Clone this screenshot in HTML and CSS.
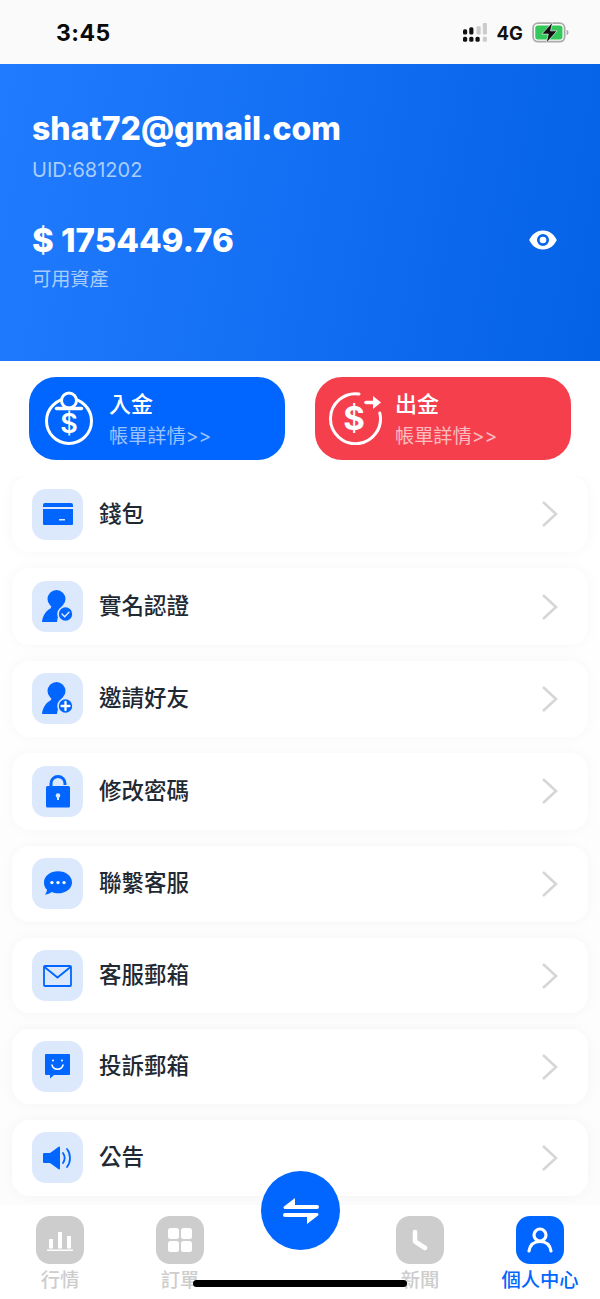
FILE: index.html
```html
<!DOCTYPE html>
<html lang="zh-Hant">
<head>
<meta charset="utf-8">
<title>個人中心</title>
<link rel="stylesheet" href="styles.css">
</head>
<body>
<div class="app">
  <header class="status">
    <span class="time">3:45</span>
    <div class="status-right">
      <svg class="signal" width="25" height="21" viewBox="0 0 24 20">
        <g fill="#111"><rect x="0" y="6" width="4" height="5" rx="1.500"/><rect x="0" y="13" width="4" height="5" rx="1.500"/><rect x="6" y="4" width="4" height="7" rx="1.500"/><rect x="6" y="13" width="4" height="5" rx="1.500"/><rect x="12" y="13" width="4" height="5" rx="1.500"/></g>
        <g fill="#ccc"><rect x="13" y="3" width="4" height="8" rx="1"/><rect x="19" y="0" width="4" height="11" rx="1"/><rect x="19" y="13" width="4" height="5" rx="1"/></g>
      </svg>
      <span class="net">4G</span>
      <svg class="battery" width="37" height="22" viewBox="0 0 34 20">
        <rect x="1" y="1" width="29" height="17" rx="4.500" fill="none" stroke="#aaa" stroke-width="1.600"/>
        <rect x="3" y="3" width="25" height="13" rx="2.500" fill="#34c759"/>
        <path d="M31.800 7v5c1-.4 1.700-1.300 1.700-2.500s-.7-2.100-1.700-2.500z" fill="#aaa"/>
        <path d="M19 0L9 11h6l-2 8.500L23 8h-6z" fill="#111" stroke="#fafafa" stroke-width=".6"/>
      </svg>
    </div>
  </header>

  <section class="hero">
    <h1 class="email">shat72@gmail.com</h1>
    <p class="uid">UID:681202</p>
    <div class="balance-row">
      <span class="balance">$ 175449.76</span>
      <svg class="eye" width="28" height="20" viewBox="0 0 28 20"><path fill-rule="evenodd" d="M14 .5C21 .5 25.500 5 27.800 10 25.500 15 21 19.500 14 19.500S2.500 15 .2 10C2.500 5 7 .5 14 .5zm0 3.500a6 6 0 1 0 0 12 6 6 0 0 0 0-12z" fill="#fff"/><circle cx="14" cy="10" r="3.300" fill="#fff"/></svg>
    </div>
    <p class="caption">可用資產</p>
  </section>

  <section class="actions">
    <a class="action action-in">
      <svg class="action-icon" width="50" height="54" viewBox="0 0 50 54">
        <circle cx="24" cy="30" r="22.500" fill="none" stroke="#fff" stroke-width="3"/>
        <circle cx="24" cy="9.500" r="7.500" fill="#0066ff" stroke="#fff" stroke-width="3"/>
        <path d="M11.500 17.500h25" stroke="#fff" stroke-width="3.500" stroke-linecap="round"/>
        <text x="24" y="42" text-anchor="middle" class="dollar">$</text>
      </svg>
      <div class="action-text"><strong>入金</strong><span>帳單詳情&gt;&gt;</span></div>
    </a>
    <a class="action action-out">
      <svg class="action-icon" width="56" height="54" viewBox="0 0 56 54">
        <path d="M32 3A25 25 0 1 0 52.800 22" fill="none" stroke="#fff" stroke-width="3" stroke-linecap="round"/>
        <path d="M39 11.500h8" stroke="#fff" stroke-width="3.600" stroke-linecap="round"/>
        <path d="M46 5l8 6.500-8 6.500z" fill="#fff"/>
        <text x="27" y="39" text-anchor="middle" class="dollar dollar-lg">$</text>
      </svg>
      <div class="action-text"><strong>出金</strong><span>帳單詳情&gt;&gt;</span></div>
    </a>
  </section>

  <main class="menu">
    <a class="row">
      <span class="row-icon"><svg width="30" height="24" viewBox="0 0 30 24"><path fill="#0066ff" d="M2 1h26a2 2 0 0 1 2 2v2H0V3a2 2 0 0 1 2-2zM0 7h30v15a1 1 0 0 1-1 1H1a1 1 0 0 1-1-1zm16 10v1.500h6V17z" fill-rule="evenodd"/></svg></span>
      <span class="row-label">錢包</span>
      <svg class="chev" width="18" height="28" viewBox="0 0 18 28"><path d="M2 2l13 12L2 26"/></svg>
    </a>
    <a class="row">
      <span class="row-icon"><svg width="32" height="33" viewBox="0 0 32 33"><circle cx="14.500" cy="9" r="9" fill="#0066ff"/><path fill="#0066ff" d="M0 32c.6-6 3.600-11 8.500-13.500L10 15h9l1.500 3.500c1.500.7 2.700 1.500 3.700 2.500A11 11 0 0 0 15 32z"/><circle cx="23.500" cy="24" r="7.500" fill="#0066ff" stroke="#dce9fd" stroke-width="1.600"/><path d="M20 24l2.700 2.700 4.300-4.400" fill="none" stroke="#dce9fd" stroke-width="1.500" stroke-linecap="round"/></svg></span>
      <span class="row-label">實名認證</span>
      <svg class="chev" width="18" height="28" viewBox="0 0 18 28"><path d="M2 2l13 12L2 26"/></svg>
    </a>
    <a class="row">
      <span class="row-icon"><svg width="32" height="33" viewBox="0 0 32 33"><circle cx="14.500" cy="9" r="9" fill="#0066ff"/><path fill="#0066ff" d="M0 32c.6-6 3.600-11 8.500-13.500L10 15h9l1.500 3.500c1.500.7 2.700 1.500 3.700 2.500A11 11 0 0 0 15 32z"/><circle cx="23.500" cy="24" r="7.500" fill="#0066ff" stroke="#dce9fd" stroke-width="1.600"/><path d="M19.500 24h8M23.500 20v8" stroke="#fff" stroke-width="2.300" stroke-linecap="round"/></svg></span>
      <span class="row-label">邀請好友</span>
      <svg class="chev" width="18" height="28" viewBox="0 0 18 28"><path d="M2 2l13 12L2 26"/></svg>
    </a>
    <a class="row">
      <span class="row-icon"><svg width="26" height="33" viewBox="0 0 26 33"><path d="M6 11V8.500a7 7 0 0 1 14 0V10" fill="none" stroke="#0066ff" stroke-width="3"/><rect x="1" y="11" width="24" height="21.500" rx="1.500" fill="#0066ff"/><circle cx="13" cy="20.500" r="2.300" fill="#dce9fd"/><path d="M12 21h2v4h-2z" fill="#dce9fd"/></svg></span>
      <span class="row-label">修改密碼</span>
      <svg class="chev" width="18" height="28" viewBox="0 0 18 28"><path d="M2 2l13 12L2 26"/></svg>
    </a>
    <a class="row">
      <span class="row-icon"><svg width="28" height="25" viewBox="0 0 30 26"><path fill="#0066ff" d="M15 0c8.300 0 15 5.200 15 11.800S23.300 23.500 15 23.500c-2.500 0-4.800-.5-6.800-1.300C6 24 3.500 25 1 24.800c1.200-1.300 2-3 2.300-5C1.200 17.800 0 15 0 11.800 0 5.200 6.700 0 15 0z"/><circle cx="8.500" cy="12" r="1.800" fill="#fff"/><circle cx="15" cy="12" r="1.800" fill="#fff"/><circle cx="21.500" cy="12" r="1.800" fill="#fff"/></svg></span>
      <span class="row-label">聯繫客服</span>
      <svg class="chev" width="18" height="28" viewBox="0 0 18 28"><path d="M2 2l13 12L2 26"/></svg>
    </a>
    <a class="row row-s">
      <span class="row-icon"><svg width="29" height="22" viewBox="0 0 29 22"><rect x="1" y="1" width="27" height="20" rx="1" fill="none" stroke="#0066ff" stroke-width="1.800"/><path d="M1.500 2l13 10.500L27.500 2" fill="none" stroke="#0066ff" stroke-width="1.800"/></svg></span>
      <span class="row-label">客服郵箱</span>
      <svg class="chev" width="18" height="28" viewBox="0 0 18 28"><path d="M2 2l13 12L2 26"/></svg>
    </a>
    <a class="row row-s">
      <span class="row-icon"><svg width="25" height="25" viewBox="0 0 25 25"><path fill="#0066ff" d="M1 0h23a1 1 0 0 1 1 1v19a1 1 0 0 1-1 1H9l-4 3.500V21H1a1 1 0 0 1-1-1V1a1 1 0 0 1 1-1z"/><circle cx="8" cy="6.500" r="1" fill="#fff"/><circle cx="17" cy="6.500" r="1" fill="#fff"/><path d="M7 11c1.200 5.500 9.800 5.500 11 0" fill="none" stroke="#fff" stroke-width="1.500" stroke-linecap="round"/></svg></span>
      <span class="row-label">投訴郵箱</span>
      <svg class="chev" width="18" height="28" viewBox="0 0 18 28"><path d="M2 2l13 12L2 26"/></svg>
    </a>
    <a class="row row-s">
      <span class="row-icon"><svg width="30" height="24" viewBox="0 0 30 24"><path fill="#0066ff" d="M1 7h6l9-6.500c.5 0 1 .4 1 1v21c0 .6-.5 1-1 1L7 17H1a1 1 0 0 1-1-1V8a1 1 0 0 1 1-1z"/><path d="M20 7c2 3 2 7 0 10M24 3c4 5 4 13 0 18" fill="none" stroke="#0066ff" stroke-width="1.800" stroke-linecap="round"/></svg></span>
      <span class="row-label">公告</span>
      <svg class="chev" width="18" height="28" viewBox="0 0 18 28"><path d="M2 2l13 12L2 26"/></svg>
    </a>
  </main>

  <nav class="tabs">
    <a class="tab">
      <span class="tab-icon"><svg width="26" height="22" viewBox="0 0 26 22"><path fill="#fff" d="M2 10h4v9.500H2zM11 3h4v16.500h-4zM20 7h4v12.500h-4zM0 20.500h26V22H0z"/></svg></span>
      <span class="tab-label">行情</span>
    </a>
    <a class="tab">
      <span class="tab-icon"><svg width="24" height="24" viewBox="0 0 24 24"><rect x="0" y="0" width="11" height="11" rx="2.500" fill="#fff"/><rect x="13" y="0" width="11" height="11" rx="2.500" fill="#fff"/><rect x="0" y="13" width="11" height="11" rx="2.500" fill="#fff"/><rect x="13" y="13" width="11" height="11" rx="2.500" fill="#fff"/></svg></span>
      <span class="tab-label">訂單</span>
    </a>
    <span class="tab tab-spacer"></span>
    <a class="tab">
      <span class="tab-icon"><svg width="16" height="22" viewBox="0 0 16 22"><path d="M3 3v9.500L13 19" fill="none" stroke="#fff" stroke-width="4.500" stroke-linecap="round" stroke-linejoin="round"/></svg></span>
      <span class="tab-label">新聞</span>
    </a>
    <a class="tab tab-active">
      <span class="tab-icon"><svg width="26" height="26" viewBox="0 0 26 26"><circle cx="13" cy="8" r="6" fill="none" stroke="#fff" stroke-width="3.200"/><path d="M2 24c1-6 5-9.500 11-9.500S23 18 24 24" fill="none" stroke="#fff" stroke-width="3.200" stroke-linecap="round"/></svg></span>
      <span class="tab-label">個人中心</span>
    </a>
  </nav>

  <button class="swap" type="button" aria-label="swap">
    <svg width="38" height="28" viewBox="0 0 38 28"><path fill="#fff" d="M13 1v7h22a2 2 0 0 1 0 4H3a1.500 1.500 0 0 1-1-2.600zM3 16h32a1.500 1.500 0 0 1 1 2.600L25 27v-7H3a2 2 0 0 1 0-4z"/></svg>
  </button>
  <div class="home-bar"></div>
</div>
</body>
</html>
```

FILE: styles.css
```css
* { box-sizing: border-box; }
html, body { margin: 0; padding: 0; }
body {
  width: 600px;
  height: 1299px;
  overflow: hidden;
  background: #fff;
  font-family: Inter, "Noto Sans CJK TC", sans-serif;
}
p, h1 { margin: 0; }
.app {
  position: relative;
  display: flex;
  flex-direction: column;
  width: 600px;
  height: 1299px;
  overflow: hidden;
}
.status {
  flex: none;
  height: 64px;
  padding: 2px 31px 0 56px;
  display: flex;
  align-items: center;
  justify-content: space-between;
  background: #fafafa;
}
.time {
  font: 700 23px/1 Inter, sans-serif;
  color: #0a0a0a;
  letter-spacing: .5px;
}
.status-right { display: flex; align-items: center; gap: 9px; }
.net { font: 700 18.500px/1 Inter, sans-serif; color: #111; }
.hero {
  flex: none;
  height: 297px;
  padding: 47px 32px 0;
  background: linear-gradient(100deg, #217bff 0%, #0462e6 100%);
  color: #fff;
}
.email { font: 800 32px/36px Inter, sans-serif; }
.uid { margin-top: 11px; font: 400 20px/24px Inter, sans-serif; color: #a9cdfb; }
.balance-row {
  margin-top: 39px;
  padding-right: 11px;
  display: flex;
  align-items: center;
  justify-content: space-between;
}
.balance { font: 800 33px/38px Inter, sans-serif; }
.caption { margin-top: 7px; font-size: 19.200px; line-height: 26px; color: #a9cdfb; }
.actions {
  flex: none;
  height: 115px;
  padding: 16px 29px 0;
  display: flex;
  justify-content: space-between;
}
.action {
  width: 256px;
  height: 83px;
  border-radius: 27px;
  padding: 14px 0 0 16px;
  display: flex;
  align-items: flex-start;
  gap: 14px;
  color: #fff;
}
.action-in { background: #0066ff; }
.action-out { padding-left: 12px; gap: 12px; background: #f53f4d; }
.action-icon { flex: none; }
.dollar { font: 600 27px Inter, sans-serif; fill: #fff; }
.dollar-lg { font-size: 33px; font-weight: 700; }
.action-text { display: flex; flex-direction: column; }
.action-text strong { font-size: 22px; font-weight: 500; line-height: 28px; margin-top: -1px; }
.action-text span { margin-top: 5px; font-size: 19.200px; line-height: 26px; opacity: .6; white-space: nowrap; }
.action-out .action-text span { opacity: .65; }
.menu {
  flex: 1;
  min-height: 0;
  padding: 0 12px;
  display: flex;
  flex-direction: column;
  gap: 16px;
  overflow: hidden;
  background: linear-gradient(#fff, #fcfcfc);
}
.row {
  flex: none;
  height: 76.400px;
  padding: 0 29px 0 20px;
  display: flex;
  align-items: center;
  background: #fff;
  border-radius: 18px;
  box-shadow: 0 0 14px rgba(0, 0, 0, .035);
}
.row-s { height: 75.200px; }
.row-icon {
  flex: none;
  width: 51px;
  height: 51px;
  border-radius: 14px;
  background: #dce9fd;
  display: flex;
  align-items: center;
  justify-content: center;
}
.row-label {
  flex: 1;
  margin: 0 0 1px 16px;
  font-size: 22.500px;
  line-height: 30px;
  font-weight: 500;
  color: #1f2933;
}
.chev { flex: none; }
.chev path { fill: none; stroke: #d6d6d6; stroke-width: 2.600; }
.tabs {
  flex: none;
  height: 94px;
  padding-top: 11px;
  display: flex;
  background: #fff;
}
.tab {
  width: 120px;
  display: flex;
  flex-direction: column;
  align-items: center;
  color: #cdcdcd;
}
.tab-icon {
  width: 48px;
  height: 48px;
  border-radius: 14px;
  background: #cdcdcd;
  display: flex;
  align-items: center;
  justify-content: center;
}
.tab-label { margin-top: 2px; font-size: 19.300px; line-height: 28px; font-weight: 500; white-space: nowrap; }
.tab-active { color: #0066ff; }
.tab-active .tab-icon { background: #0066ff; }
.swap {
  position: absolute;
  left: 261px;
  top: 1171px;
  width: 79px;
  height: 79px;
  padding: 0;
  border: 0;
  border-radius: 50%;
  background: #0066ff;
  display: flex;
  align-items: center;
  justify-content: center;
}
.home-bar {
  position: absolute;
  left: 193px;
  top: 1280px;
  width: 214px;
  height: 7px;
  border-radius: 4px;
  background: #000;
}
```
